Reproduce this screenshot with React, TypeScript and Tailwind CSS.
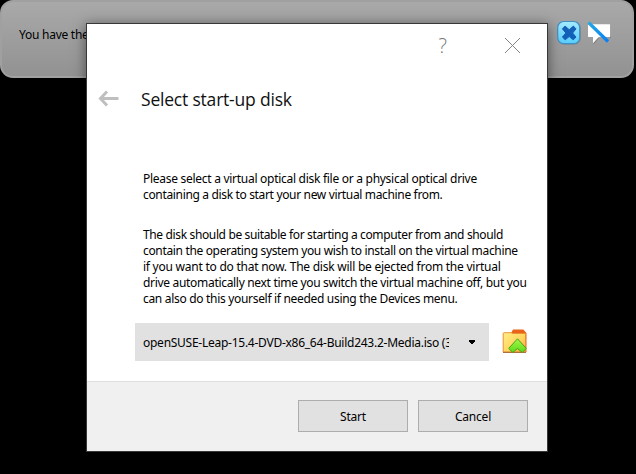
import React from "react";

function Line({ children, className = "" }: { children: React.ReactNode; className?: string }) {
  return <div className={`h-4 whitespace-nowrap leading-4 ${className}`}><span>{children}</span></div>;
}

function MessageBar() {
  return (
    <header className="flex h-[78px] w-[634px] items-start justify-between rounded-[13px] border-2 border-[#a0a0a0] bg-linear-to-b from-[#a9a9a9] to-[#929292]">
      <span className="mt-[25px] ml-[17px] leading-4 whitespace-nowrap tracking-[-0.25px]">You have the</span>
      <div className="mt-[18px] mr-[20px] flex items-start gap-[5px]">
        <svg width="25" height="26" viewBox="0 0 25 26">
          <defs>
            <linearGradient id="close" x1="0" y1="0" x2="0" y2="1">
              <stop offset="0" stopColor="#a5eaff" />
              <stop offset="1" stopColor="#58cdfb" />
            </linearGradient>
          </defs>
          <rect x="1" y="1.8" width="23" height="23" rx="6.5" fill="#8b8b8b" />
          <rect x="0.7" y="1.5" width="22" height="22.2" rx="6" fill="url(#close)" stroke="#3e91c5" strokeWidth="1.2" />
          <path d="M8 6.1 12.2 9.7 16.4 6.1 19 8.9 15.6 13 19 17.1 16.2 19.8 12.2 16.5 8.2 19.8 5.4 17.1 8.9 13 5.4 8.9Z" fill="#1260b8" stroke="#1260b8" strokeWidth="1" strokeLinejoin="round" />
        </svg>
        <svg width="25" height="26" viewBox="0 0 25 26">
          <path d="M2.5 5h20.5q1 0 1 1v11q0 1-1 1H12l-5.5 6.5V18h-4q-1 0-1-1V6q0-1 1-1Z" fill="#666" opacity=".6" />
          <path d="M2 4.2h20.3q1 0 1 1v11q0 1-1 1H11.5l-5.5 6V17.2H2q-1 0-1-1v-11q0-1 1-1Z" fill="#fff" />
          <path d="M1.5 2.5 21 21.5" stroke="url(#slash)" strokeWidth="3.2" />
          <defs>
            <linearGradient id="slash" x1="0" y1="0" x2="1" y2="1">
              <stop stopColor="#28a7e2" />
              <stop offset="1" stopColor="#077ff4" />
            </linearGradient>
          </defs>
        </svg>
      </div>
    </header>
  );
}

function FolderIcon() {
  return (
    <svg width="25" height="25" viewBox="0 0 25 25">
      <defs>
        <linearGradient id="folder" x1="0" y1="0" x2="1" y2="1">
          <stop stopColor="#ffee88" />
          <stop offset=".6" stopColor="#ffd45c" />
          <stop offset="1" stopColor="#ffa035" />
        </linearGradient>
        <linearGradient id="arrow" x1="0" y1="0" x2="0" y2="1">
          <stop stopColor="#a6f64b" />
          <stop offset="1" stopColor="#5bdc18" />
        </linearGradient>
      </defs>
      <path d="M9 4 11 .6h10q1.2 0 1.6 1.5L24.5 4v19H9Z" fill="#e9641b" />
      <path d="M1.2 4.7q0-1 1-1h7.3l1.4.8h12.6V23H1.2Z" fill="url(#folder)" stroke="#e99035" strokeWidth="1" />
      <path d="M1 23.4h23" stroke="#a76632" />
      <path d="M15.5 9.8 24.3 19.4 20.3 23.4 15.5 19.6 10.7 23.4 6.7 19.4Z" fill="url(#arrow)" stroke="#43a41c" strokeWidth="1" strokeLinejoin="round" />
    </svg>
  );
}

function DialogButton({ children }: { children: React.ReactNode }) {
  return <button className="h-8 w-[110px] border border-[#adadad] bg-[#e1e1e1] pt-[2px] leading-4 tracking-[-0.2px]">{children}</button>;
}

export default function App() {
  return (
    <main className="relative h-[474px] w-[636px] overflow-hidden bg-black font-['Noto_Sans',sans-serif] text-[12px] text-black">
      <MessageBar />
      <section className="absolute top-[23px] left-[86px] flex h-[429px] w-[462px] flex-col border border-[#383838] bg-white shadow-[0_2px_12px_rgba(0,0,0,0.5)]">
        <div className="flex h-[44px] items-start justify-end pr-[26px]">
          <span className="mt-[8px] mr-[57px] font-['Open_Sans',sans-serif] text-[20px] leading-[28px] font-light text-[#777]">?</span>
          <svg className="mt-[13px]" width="17" height="17" viewBox="0 0 17 17"><path d="m1 1 15 15M16 1 1 16" stroke="#858585" /></svg>
        </div>
        <div className="flex h-[61px] items-center pl-[11px]">
          <svg width="21" height="17" viewBox="0 0 21 17"><path d="M9 1.5 2.5 8.5 9 15.5M2 8.5h18.5" fill="none" stroke="#bfbfbf" strokeWidth="3" /></svg>
          <h1 className="ml-[22px] whitespace-nowrap font-['Open_Sans',sans-serif] text-[17.5px] leading-6 font-normal tracking-[-0.2px] text-[#111]">Select start-up disk</h1>
        </div>
        <div className="ml-[56px] mt-[42px]">
          <Line className="tracking-[-0.28px]">Please select a virtual optical disk file or a physical optical drive</Line>
          <Line className="tracking-[-0.34px]">containing a disk to start your new virtual machine from.</Line>
          <div className="h-6" />
          <Line className="tracking-[-0.36px]">The disk should be suitable for starting a computer from and should</Line>
          <Line className="tracking-[-0.34px]">contain the operating system you wish to install on the virtual machine</Line>
          <Line className="tracking-[-0.24px]">if you want to do that now. The disk will be ejected from the virtual</Line>
          <Line className="tracking-[-0.31px]">drive automatically next time you switch the virtual machine off, but you</Line>
          <Line className="tracking-[-0.31px]">can also do this yourself if needed using the Devices menu.</Line>
        </div>
        <div className="mt-[16px] ml-[48px] flex items-start">
          <div className="flex h-[38px] w-[354px] items-center bg-[#e1e1e1] pl-[8px]">
            <span className="w-[306px] overflow-hidden whitespace-nowrap pt-px tracking-[-0.26px]">openSUSE-Leap-15.4-DVD-x86_64-Build243.2-Media.iso (3</span>
            <svg className="ml-[20px]" width="7" height="5" viewBox="0 0 7 5"><path d="M0 0h6v2H5v1H4v1H2V3H1V2H0Z" /></svg>
          </div>
          <div className="mt-[6px] ml-[13px]"><FolderIcon /></div>
        </div>
        <footer className="mt-auto flex h-[70px] items-start justify-end gap-[10px] border-t border-[#dfdfdf] bg-[#f0f0f0] pt-[18px] pr-[19px]">
          <DialogButton>Start</DialogButton>
          <DialogButton>Cancel</DialogButton>
        </footer>
      </section>
    </main>
  );
}
